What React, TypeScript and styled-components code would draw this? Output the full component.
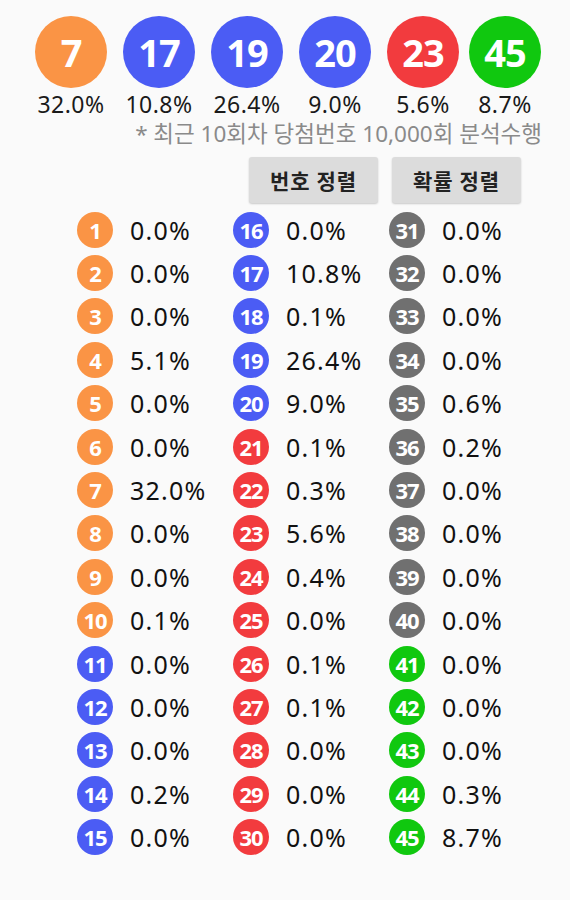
import React from 'react';
import styled, { createGlobalStyle } from 'styled-components';

const GlobalStyle = createGlobalStyle`
  body {
    margin: 0;
    background: #fafafa;
    font-family: 'Noto Sans', 'Noto Sans CJK KR', sans-serif;
  }
`;

const COLORS = ['#fa9445', '#4b5cf4', '#f23b3e', '#707070', '#10c80f'];
const ballColor = (n: number) => COLORS[Math.min(4, Math.floor((n - 1) / 10))];

const picks = [
  { num: 7, rate: '32.0%' },
  { num: 17, rate: '10.8%' },
  { num: 19, rate: '26.4%' },
  { num: 20, rate: '9.0%' },
  { num: 23, rate: '5.6%' },
  { num: 45, rate: '8.7%' }
];

const rates = [
  '0.0', '0.0', '0.0', '5.1', '0.0', '0.0', '32.0', '0.0', '0.0', '0.1',
  '0.0', '0.0', '0.0', '0.2', '0.0', '0.0', '10.8', '0.1', '26.4', '9.0',
  '0.1', '0.3', '5.6', '0.4', '0.0', '0.1', '0.1', '0.0', '0.0', '0.0',
  '0.0', '0.0', '0.0', '0.0', '0.6', '0.2', '0.0', '0.0', '0.0', '0.0',
  '0.0', '0.0', '0.0', '0.3', '8.7'
];

const Page = styled.div`
  padding-top: 16px;
  color: #1a1a1a;
`;

const PickRow = styled.div`
  display: flex;
  gap: 16px;
  padding-left: 35px;
`;

const Pick = styled.div<{ $tight?: boolean }>`
  display: flex;
  flex-direction: column;
  align-items: center;
  width: 72px;
  margin-left: ${p => (p.$tight ? '-6px' : '0')};
`;

const BigBall = styled.div<{ $color: string }>`
  width: 72px;
  height: 72px;
  border-radius: 50%;
  background: ${p => p.$color};
  color: #fff;
  font-size: 38px;
  font-weight: 700;
  display: flex;
  align-items: center;
  justify-content: center;
  letter-spacing: -1px;
`;

const PickRate = styled.div`
  font-size: 23px;
  letter-spacing: 0.5px;
  line-height: 26px;
  margin-top: 3px;
  white-space: nowrap;
`;

const Note = styled.div`
  text-align: right;
  padding-right: 28px;
  margin-top: 4px;
  font-size: 22.5px;
  line-height: 26px;
  color: #8a8a8a;
  white-space: nowrap;
`;

const ButtonRow = styled.div`
  display: flex;
  justify-content: flex-end;
  gap: 14px;
  padding-right: 49px;
  margin-top: 10px;
`;

const SortButton = styled.button`
  width: 129px;
  height: 46px;
  border: none;
  border-radius: 3px;
  background: #dcdcdc;
  box-shadow: 0 1px 2px rgba(0, 0, 0, 0.2);
  font-family: 'Noto Sans CJK KR', sans-serif;
  font-size: 21px;
  letter-spacing: 1px;
  font-weight: 700;
  color: #222;
  padding: 0;
`;

const Grid = styled.div`
  display: grid;
  grid-auto-flow: column;
  grid-template-rows: repeat(15, 43.4px);
  grid-template-columns: repeat(3, 156px);
  padding-left: 77px;
  margin-top: 5px;
`;

const Cell = styled.div`
  display: flex;
  align-items: center;
  gap: 17px;
`;

const SmallBall = styled.div<{ $color: string }>`
  width: 36px;
  height: 36px;
  flex: none;
  border-radius: 50%;
  background: ${p => p.$color};
  color: #fff;
  font-size: 22px;
  font-weight: 700;
  letter-spacing: -1.2px;
  display: flex;
  align-items: center;
  justify-content: center;
`;

const Rate = styled.span`
  font-size: 25px;
  letter-spacing: 1.2px;
  color: #111;
`;

export default function App() {
  return (
    <Page>
      <GlobalStyle />
      <PickRow>
        {picks.map((p, i) => (
          <Pick key={p.num} $tight={i === picks.length - 1}>
            <BigBall $color={ballColor(p.num)}>{p.num}</BigBall>
            <PickRate>{p.rate}</PickRate>
          </Pick>
        ))}
      </PickRow>
      <Note>* 최근 10회차 당첨번호 10,000회 분석수행</Note>
      <ButtonRow>
        <SortButton>번호 정렬</SortButton>
        <SortButton>확률 정렬</SortButton>
      </ButtonRow>
      <Grid>
        {rates.map((r, i) => (
          <Cell key={i}>
            <SmallBall $color={ballColor(i + 1)}>{i + 1}</SmallBall>
            <Rate>{r}%</Rate>
          </Cell>
        ))}
      </Grid>
    </Page>
  );
}
